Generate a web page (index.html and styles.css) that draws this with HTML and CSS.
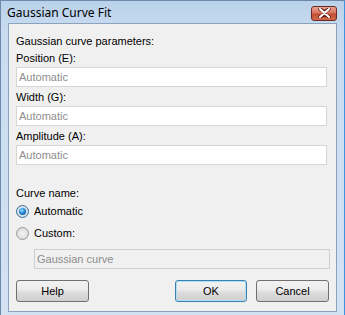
FILE: index.html
```html
<!DOCTYPE html>
<html>
<head>
    <title>Gaussian Curve Fit</title>
    <link rel="stylesheet" href="styles.css">
</head>
<body>
    <div class="window">
        <div class="titlebar">
            <span class="title">Gaussian Curve Fit</span>
            <span class="close-btn">
                <svg width="15" height="10" viewBox="0 0 15 10">
                    <path d="M3 1 L7.5 4 L12 1 M3 9 L7.5 6 L12 9" stroke="#5a1a10" stroke-width="3.4" fill="none" stroke-linecap="round"/>
                    <path d="M3 1 L12 9 M12 1 L3 9" stroke="#ffffff" stroke-width="2" fill="none" stroke-linecap="round"/>
                </svg>
            </span>
        </div>

        <div class="client">
            <div class="label first">Gaussian curve parameters:</div>

            <div class="label">Position (E):</div>
            <div class="field">Automatic</div>

            <div class="label">Width (G):</div>
            <div class="field">Automatic</div>

            <div class="label">Amplitude (A):</div>
            <div class="field">Automatic</div>

            <div class="label section">Curve name:</div>
            <div class="radio-row first-radio">
                <span class="radio checked"><span class="dot"></span></span>
                <span>Automatic</span>
            </div>
            <div class="radio-row">
                <span class="radio"></span>
                <span>Custom:</span>
            </div>
            <div class="field custom">Gaussian curve</div>

            <div class="buttons">
                <span class="btn">Help</span>
                <span class="spacer"></span>
                <span class="btn default">OK</span>
                <span class="btn">Cancel</span>
            </div>
        </div>
    </div>
</body>
</html>
```

FILE: styles.css
```css
body {
    margin: 0;
    font-family: "Liberation Sans", Arial, sans-serif;
    font-size: 11px;
    color: #000;
}

.window {
    width: 344px;
    height: 315px;
    box-sizing: border-box;
    background: linear-gradient(to bottom, #b9d1ea 0px, #c9dcf0 30px, #d3e2f3 100%);
    border-left: 1px solid #6e8aa8;
    border-top: 1px solid #6e8aa8;
    border-right: 1px solid #3c94e0;
    width: 345px;
    display: flex;
    flex-direction: column;
}

.titlebar {
    height: 22px;
    display: flex;
    align-items: center;
    padding-left: 6px;
    padding-right: 7px;
}

.title {
    font-family: "Noto Sans", "Liberation Sans", sans-serif;
    font-size: 12px;
    flex: 1;
    color: #000;
}

.close-btn {
    width: 26px;
    height: 15px;
    box-sizing: border-box;
    border: 1px solid #6b2a22;
    border-radius: 3px;
    background: linear-gradient(to bottom, #e8a493 0%, #d7735d 45%, #c24d33 55%, #d06a4d 100%);
    display: flex;
    align-items: center;
    justify-content: center;
    margin-top: 2px;
}

.client {
    margin: 0 7px 3px 7px;
    flex: 1;
    background: #f0f0f0;
    border: 1px solid #8ba2bd;
    padding: 11px 10px 0 7px;
    display: flex;
    flex-direction: column;
}

.label {
    line-height: 13px;
    margin-top: 4px;
}

.label.first {
    margin-top: 0;
}

.label.section {
    margin-top: 22px;
}

.field {
    height: 20px;
    box-sizing: border-box;
    margin-top: 2px;
    border: 1px solid #d6d6d6;
    background: #fff;
    color: #8d8d8d;
    padding: 0 0 0 2px;
    line-height: 18px;
    width: 311px;
}

.field.custom {
    width: 296px;
    margin-left: 18px;
    margin-top: 8px;
    background: #f0f0f0;
    border-color: #cfcfcf;
}

.radio-row {
    display: flex;
    align-items: center;
    height: 16px;
    margin-top: 6px;
}

.radio-row.first-radio {
    margin-top: 3px;
}

.radio {
    width: 13px;
    height: 13px;
    box-sizing: border-box;
    border-radius: 50%;
    border: 1px solid #9a9a9a;
    background: radial-gradient(circle at 50% 50%, #f4f4f4 0%, #dcdcdc 70%, #cfcfcf 100%);
    margin-right: 5px;
    display: flex;
    align-items: center;
    justify-content: center;
}

.radio.checked {
    border-color: #3b6e96;
    background: radial-gradient(circle, #e6eef5 0%, #c9d9e6 100%);
}

.dot {
    width: 7px;
    height: 7px;
    border-radius: 50%;
    background: radial-gradient(circle at 40% 35%, #8ee0ff 0%, #2a8ad4 45%, #0e3f7a 100%);
}

.buttons {
    display: flex;
    margin-top: 11px;
    width: 313px;
}

.spacer {
    flex: 1;
}

.btn {
    width: 73px;
    height: 22px;
    box-sizing: border-box;
    border: 1px solid #707070;
    border-radius: 3px;
    background: linear-gradient(to bottom, #f2f2f2 0%, #ebebeb 45%, #dddddd 55%, #cfcfcf 100%);
    display: flex;
    align-items: center;
    justify-content: center;
    margin-left: 9px;
}

.btn:first-child {
    margin-left: 0;
}

.btn.default {
    border-color: #3c7fb1;
    width: 72px;
    box-shadow: inset 0 0 0 1px #a9e2f6;
}
```
